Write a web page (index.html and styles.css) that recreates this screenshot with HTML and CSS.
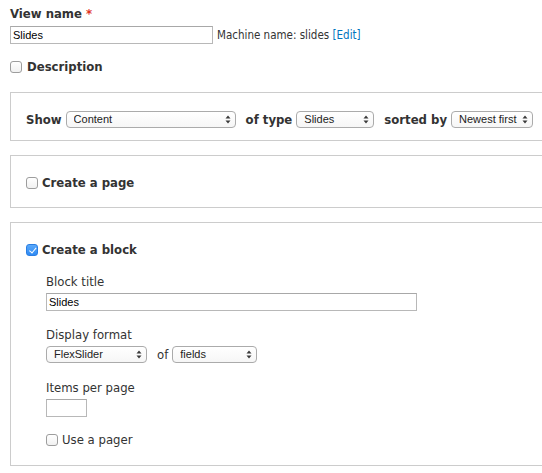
FILE: index.html
```html
<!DOCTYPE html>
<html lang="en">
<head>
<meta charset="utf-8">
<title>Add view</title>
<link rel="stylesheet" href="styles.css">
</head>
<body>
<div class="page">
  <div class="name-item">
    <label class="strong" for="vname">View name <span class="req">*</span></label>
    <div class="name-row">
      <input id="vname" class="text-input w-name" type="text" value="Slides">
      <span class="machine">Machine name: slides <a href="#">[Edit]</a></span>
    </div>
  </div>

  <div class="check-row desc-row">
    <input class="cb" type="checkbox" id="desc">
    <label class="strong" for="desc">Description</label>
  </div>

  <div class="box box-show">
    <div class="show-row">
      <span class="strong lbl">Show</span>
      <span class="select w-content"><select><option>Content</option></select><svg class="arr" width="6" height="9" viewBox="0 0 6 9"><path d="M0.5 3.6 L3 0.4 L5.5 3.6Z M0.5 5.4 L3 8.6 L5.5 5.4Z"/></svg></span>
      <span class="strong lbl">of type</span>
      <span class="select w-slides"><select><option>Slides</option></select><svg class="arr" width="6" height="9" viewBox="0 0 6 9"><path d="M0.5 3.6 L3 0.4 L5.5 3.6Z M0.5 5.4 L3 8.6 L5.5 5.4Z"/></svg></span>
      <span class="strong lbl">sorted by</span>
      <span class="select w-sort"><select><option>Newest first</option></select><svg class="arr" width="6" height="9" viewBox="0 0 6 9"><path d="M0.5 3.6 L3 0.4 L5.5 3.6Z M0.5 5.4 L3 8.6 L5.5 5.4Z"/></svg></span>
    </div>
  </div>

  <div class="box box-page">
    <div class="check-row">
      <input class="cb" type="checkbox" id="cpage">
      <label class="strong" for="cpage">Create a page</label>
    </div>
  </div>

  <div class="box box-block">
    <div class="check-row">
      <input class="cb" type="checkbox" id="cblock" checked>
      <label class="strong" for="cblock">Create a block</label>
    </div>
    <div class="block-opts">
      <div class="form-item">
        <label class="plain" for="btitle">Block title</label>
        <input id="btitle" class="text-input w-title" type="text" value="Slides">
      </div>
      <div class="form-item">
        <label class="plain">Display format</label>
        <div class="format-row">
          <span class="select w-flex"><select><option>FlexSlider</option></select><svg class="arr" width="6" height="9" viewBox="0 0 6 9"><path d="M0.5 3.6 L3 0.4 L5.5 3.6Z M0.5 5.4 L3 8.6 L5.5 5.4Z"/></svg></span>
          <span class="of">of</span>
          <span class="select w-fields"><select><option>fields</option></select><svg class="arr" width="6" height="9" viewBox="0 0 6 9"><path d="M0.5 3.6 L3 0.4 L5.5 3.6Z M0.5 5.4 L3 8.6 L5.5 5.4Z"/></svg></span>
        </div>
      </div>
      <div class="form-item items-item">
        <label class="plain" for="items">Items per page</label>
        <input id="items" class="text-input w-items" type="text" value="">
      </div>
      <div class="check-row pager-row">
        <input class="cb" type="checkbox" id="pager">
        <label class="plain" for="pager">Use a pager</label>
      </div>
    </div>
  </div>
</div>
</body>
</html>
```

FILE: styles.css
```css
html, body {
  margin: 0;
  background: #fff;
}

body {
  padding: 6px 0 0 10px;
  font-family: "DejaVu Sans Condensed", "DejaVu Sans", sans-serif;
  font-size: 13px;
  line-height: 16px;
  color: #333;
  overflow: hidden;
}

.page {
  width: 532px;
}

.strong {
  font-weight: bold;
}

.plain {
  font-weight: normal;
  display: block;
}

.name-item > label {
  display: block;
}

.req {
  color: #e0341f;
}

.name-row {
  display: flex;
  align-items: center;
  gap: 4px;
  margin-top: 4px;
}

.text-input {
  box-sizing: border-box;
  height: 18px;
  margin: 0;
  padding: 0 2px;
  border: 1px solid #b8b8b8;
  border-top-color: #a8a8a8;
  border-radius: 0;
  font-family: "Liberation Sans", Arial, sans-serif;
  font-size: 11px;
  color: #000;
  background: #fff;
  outline: none;
}

.w-name { width: 203px; }
.w-title { width: 371px; display: block; }
.w-items { width: 41px; display: block; }

.machine {
  font-size: 11.5px;
  color: #333;
}

.machine a {
  color: #0074bd;
  text-decoration: none;
}

.check-row {
  display: flex;
  align-items: center;
  gap: 4px;
}

.desc-row {
  margin-top: 15px;
  gap: 5px;
}

.cb {
  -webkit-appearance: none;
  appearance: none;
  flex: none;
  position: relative;
  box-sizing: border-box;
  width: 12px;
  height: 12px;
  margin: 0;
  border: 1px solid #9d9d9d;
  border-radius: 3px;
  background: linear-gradient(#ffffff, #f1f1f1);
}

.cb:checked {
  background: linear-gradient(#5aa9fa, #2f8af3);
  border-color: #2a7ee3;
}

.cb:checked::after {
  content: "";
  position: absolute;
  left: 3.5px;
  top: 1px;
  width: 2.5px;
  height: 5.5px;
  border: solid #fff;
  border-width: 0 1.5px 1.5px 0;
  transform: rotate(40deg);
}

.box {
  box-sizing: border-box;
  width: calc(100% + 20px);
  margin-right: -20px;
  border: 1px solid #ccc;
  padding: 19px 0 16px 15px;
  margin-top: 14px;
}

.box-show {
  margin-top: 17px;
  padding-top: 18px;
  padding-bottom: 12px;
}

.box-block {
  padding-bottom: 17px;
}

.show-row,
.format-row {
  display: flex;
  align-items: center;
}

.show-row .lbl {
  margin-right: 4px;
}

.show-row .select {
  margin-right: 10px;
}

.select {
  position: relative;
  display: inline-block;
  flex: none;
  height: 17px;
}

.select select {
  -webkit-appearance: none;
  appearance: none;
  box-sizing: border-box;
  width: 100%;
  height: 17px;
  margin: 0;
  padding: 0 14px 0 7px;
  border: 1px solid #ababab;
  border-radius: 4px;
  background: linear-gradient(#ffffff, #f6f6f6);
  font-family: "Liberation Sans", Arial, sans-serif;
  font-size: 11px;
  line-height: 15px;
  color: #222;
  outline: none;
}

.select .arr {
  position: absolute;
  right: 5px;
  top: 4px;
  fill: #3a3a3a;
  pointer-events: none;
}

.w-content { width: 170px; }
.w-slides { width: 78px; }
.w-sort { width: 82px; }
.w-flex { width: 101px; }
.w-fields { width: 85px; }

.block-opts {
  padding-left: 20px;
}

.form-item {
  margin-top: 16px;
}

.form-item > label {
  margin-bottom: 3px;
}

.items-item {
  margin-top: 17px;
}

.of {
  margin: 0 4px 0 10px;
}

.pager-row {
  margin-top: 15px;
}
```
